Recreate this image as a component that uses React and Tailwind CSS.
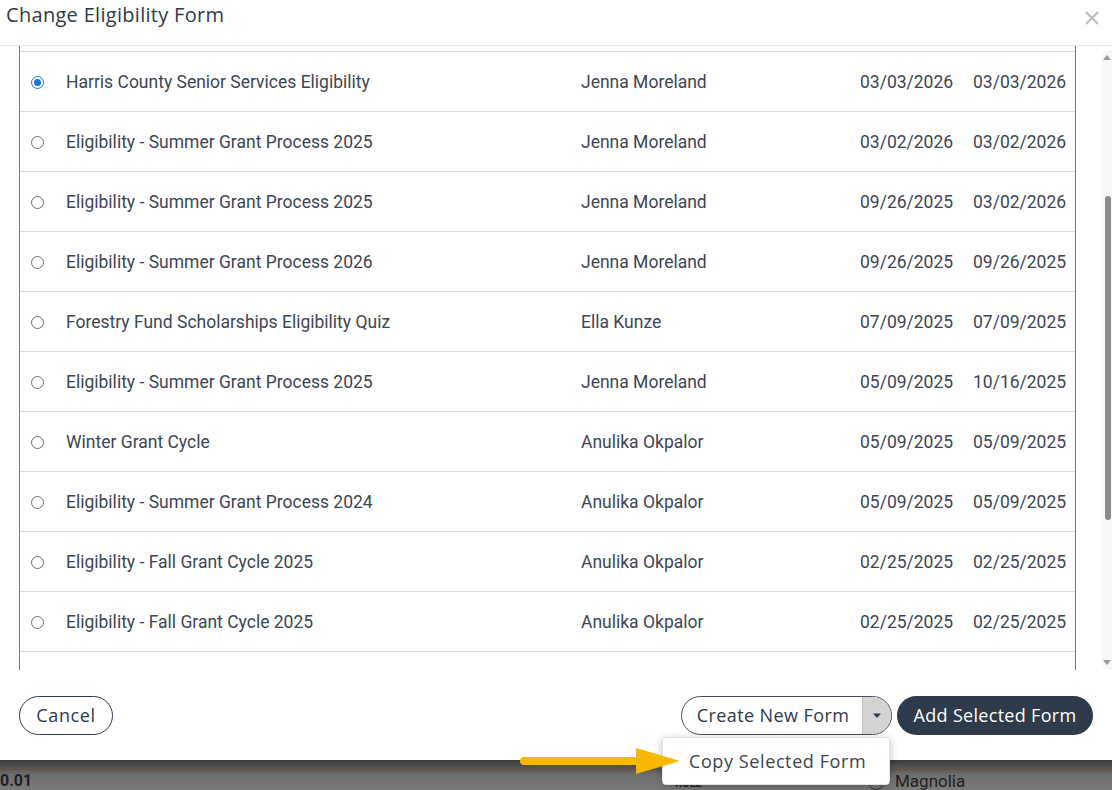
import { useState } from 'react';

const ROWS = [
  ['Harris County Senior Services Eligibility', 'Jenna Moreland', '03/03/2026', '03/03/2026'],
  ['Eligibility - Summer Grant Process 2025', 'Jenna Moreland', '03/02/2026', '03/02/2026'],
  ['Eligibility - Summer Grant Process 2025', 'Jenna Moreland', '09/26/2025', '03/02/2026'],
  ['Eligibility - Summer Grant Process 2026', 'Jenna Moreland', '09/26/2025', '09/26/2025'],
  ['Forestry Fund Scholarships Eligibility Quiz', 'Ella Kunze', '07/09/2025', '07/09/2025'],
  ['Eligibility - Summer Grant Process 2025', 'Jenna Moreland', '05/09/2025', '10/16/2025'],
  ['Winter Grant Cycle', 'Anulika Okpalor', '05/09/2025', '05/09/2025'],
  ['Eligibility - Summer Grant Process 2024', 'Anulika Okpalor', '05/09/2025', '05/09/2025'],
  ['Eligibility - Fall Grant Cycle 2025', 'Anulika Okpalor', '02/25/2025', '02/25/2025'],
  ['Eligibility - Fall Grant Cycle 2025', 'Anulika Okpalor', '02/25/2025', '02/25/2025'],
  ['', '', '', ''],
];

const poppins = { fontFamily: '"Open Sans", "Noto Sans", sans-serif' };

function Radio({ checked }) {
  if (checked) {
    return (
      <span className="w-[13px] h-[13px] rounded-full border-[1.5px] border-[#1a73e8] flex items-center justify-center shrink-0">
        <span className="w-[7px] h-[7px] rounded-full bg-[#1a73e8]" />
      </span>
    );
  }
  return <span className="w-[13px] h-[13px] rounded-full border border-[#6f6f6f] shrink-0" />;
}

export default function App() {
  const [selected, setSelected] = useState(0);

  return (
    <div className="relative w-[1112px] h-[790px] overflow-hidden bg-white text-[#3a4452]">
      {/* Modal */}
      <div className="h-[760px] bg-white flex flex-col">
        <div className="h-[46px] border-b border-[#e4e4e4] flex items-start justify-between pl-[6px] pr-[12px] shrink-0">
          <h1 className="text-[20px] tracking-[0.3px] leading-none pt-[5px] text-[#2f3a48]" style={poppins}>Change Eligibility Form</h1>
          <svg width="16" height="16" viewBox="0 0 16 16" className="mt-[10px]">
            <path d="M2 2 L14 14 M14 2 L2 14" stroke="#bdbdbd" strokeWidth="2.2" />
          </svg>
        </div>

        <div className="flex h-[624px] shrink-0">
          <div className="ml-[19px] w-[1058px] border-l border-r border-[#7a7a7a] overflow-hidden pt-[5px]"
            style={{ fontFamily: 'Roboto, "Liberation Sans", sans-serif' }}>
            {ROWS.map((r, i) => (
              <div key={i} className="h-[60px] border-t border-[#dedede] flex items-center pt-[1px] text-[17.5px] text-[#3d4654] cursor-pointer"
                onClick={() => setSelected(i)}>
                {r[0] ? (
                  <>
                    <span className="pl-[11px] flex"><Radio checked={selected === i} /></span>
                    <span className="ml-[22px] w-[515px]">{r[0]}</span>
                    <span className="w-[279px]">{r[1]}</span>
                    <span className="w-[113px]">{r[2]}</span>
                    <span>{r[3]}</span>
                  </>
                ) : null}
              </div>
            ))}
          </div>
          {/* scrollbar */}
          <div className="ml-[26px] w-[10px] mt-[4px] h-[620px] bg-[#f7f7f7] flex flex-col items-center">
            <svg width="8" height="6" viewBox="0 0 8 6" className="mt-[4px]"><path d="M0 6 L4 1 L8 6 Z" fill="#9a9a9a" /></svg>
            <div className="mt-[136px] w-[6px] h-[324px] rounded-full bg-[#8a8a8a] ml-[2px]" />
            <div className="flex-1" />
            <svg width="8" height="6" viewBox="0 0 8 6" className="mb-[4px]"><path d="M0 0 L8 0 L4 5 Z" fill="#9a9a9a" /></svg>
          </div>
        </div>

        <div className="flex items-center px-[19px] pt-[26px]" style={poppins}>
          <button className="h-[39px] w-[94px] rounded-full border border-[#2e3b4b] text-[18px] tracking-[0.6px] text-[#2e3b4b]">Cancel</button>
          <div className="flex-1" />
          <div className="h-[39px] w-[211px] rounded-full border border-[#46505c] flex overflow-hidden">
            <span className="flex-1 flex items-center justify-center text-[18px] tracking-[0.4px] text-[#2e3b4b] pl-[2px] whitespace-nowrap">Create New Form</span>
            <span className="w-[29px] bg-[#d4d4d4] border-l border-[#bdbdbd] flex items-center justify-center">
              <svg width="10" height="6" viewBox="0 0 10 6"><path d="M1 0.5 L9 0.5 L5 5 Z" fill="#2e3b4b" /></svg>
            </span>
          </div>
          <button className="ml-[5px] h-[39px] w-[196px] rounded-full bg-[#2e3b4b] text-white text-[18px] tracking-[0.3px] font-medium whitespace-nowrap">Add Selected Form</button>
        </div>
      </div>

      {/* page behind overlay */}
      <div className="relative h-[30px] bg-gradient-to-b from-[#3b3b3b] via-[#6e6e6e] to-[#7b7b7b]">
        <div className="absolute left-0 right-0 top-[9px] h-px bg-[#6e4b3a]" />
        <span className="absolute left-0 top-[13px] text-[16px] font-bold text-[#1f1f1f] leading-none" style={{ fontFamily: 'Roboto, sans-serif' }}>0.01</span>
        <span className="absolute left-[675px] top-[18px] text-[11px] font-bold text-[#222] leading-none" style={{ fontFamily: 'Roboto, sans-serif' }}>ROLE</span>
        <span className="absolute left-[868px] top-[14px] w-[16px] h-[16px] rounded-full border border-[#333]" />
        <span className="absolute left-[895px] top-[13px] text-[17px] text-[#1f1f1f] leading-none" style={{ fontFamily: 'Roboto, sans-serif' }}>Magnolia</span>
      </div>

      {/* dropdown menu */}
      <div className="absolute left-[662px] top-[737px] w-[228px] h-[48px] bg-white rounded-[4px] border border-[#e2e2e2] shadow-[0_2px_8px_rgba(0,0,0,0.25)] flex items-center pl-[26px] text-[18px] tracking-[0.6px] text-[#3a4452] whitespace-nowrap" style={poppins}>
        Copy Selected Form
      </div>

      {/* yellow annotation arrow */}
      <svg className="absolute left-[515px] top-[744px]" width="170" height="34" viewBox="0 0 170 34">
        <line x1="9" y1="17" x2="125" y2="17" stroke="#f7b900" strokeWidth="8" strokeLinecap="round" />
        <path d="M121 4 L165 17 L121 30 Z" fill="#f7b900" />
      </svg>
    </div>
  );
}
